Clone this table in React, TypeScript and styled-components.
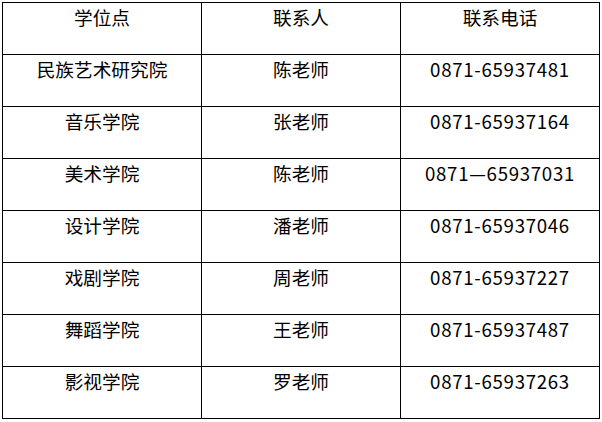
import React from 'react'
import styled, { createGlobalStyle } from 'styled-components'

const GlobalStyle = createGlobalStyle`
  html, body {
    margin: 0;
    padding: 0;
    background: #ffffff;
  }
  body {
    font-family: "Noto Sans CJK SC", "Noto Sans", sans-serif;
    color: #000000;
  }
`

const rows = [
  ['民族艺术研究院', '陈老师', '0871-65937481'],
  ['音乐学院', '张老师', '0871-65937164'],
  ['美术学院', '陈老师', '0871—65937031'],
  ['设计学院', '潘老师', '0871-65937046'],
  ['戏剧学院', '周老师', '0871-65937227'],
  ['舞蹈学院', '王老师', '0871-65937487'],
  ['影视学院', '罗老师', '0871-65937263'],
]

const Page = () => {
  return (
    <S.Wrap>
      <S.Table>
        <colgroup>
          <col style={{ width: 199 }} />
          <col style={{ width: 199 }} />
          <col style={{ width: 199 }} />
        </colgroup>
        <thead>
          <tr>
            <S.Cell as="th">学位点</S.Cell>
            <S.Cell as="th">联系人</S.Cell>
            <S.Cell as="th">联系电话</S.Cell>
          </tr>
        </thead>
        <tbody>
          {rows.map((r) => (
            <tr key={r[2]}>
              <S.Cell>{r[0]}</S.Cell>
              <S.Cell>{r[1]}</S.Cell>
              <S.Cell $mono>{r[2]}</S.Cell>
            </tr>
          ))}
        </tbody>
      </S.Table>
    </S.Wrap>
  )
}

export default function App() {
  return (
    <>
      <GlobalStyle />
      <Page />
    </>
  )
}

const S = {
  Wrap: styled.div`
    padding: 2px 0 0 2px;
  `,
  Table: styled.table`
    border-collapse: collapse;
    table-layout: fixed;
    width: 598px;
  `,
  Cell: styled.td<{ $mono?: boolean }>`
    border: 1px solid #000;
    height: 52px;
    box-sizing: border-box;
    padding: 0 2px;
    vertical-align: top;
    text-align: center;
    font-weight: normal;
    font-size: 18.67px;
    line-height: 28px;
    letter-spacing: ${(p) => (p.$mono ? '0.7px' : '0')};
  `,
}
